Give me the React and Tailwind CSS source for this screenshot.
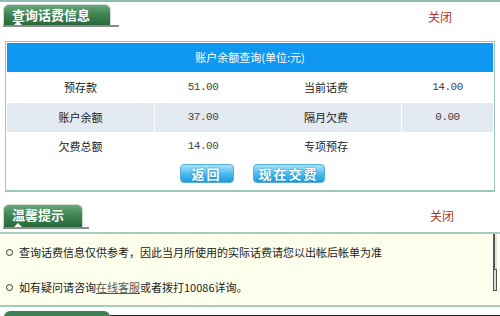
import React from "react";

const rows = [
  { a: "预存款", av: "51.00", b: "当前话费", bv: "14.00", alt: false, h: "h-[31px]" },
  { a: "账户余额", av: "37.00", b: "隔月欠费", bv: "0.00", alt: true, h: "h-[29px]" },
  { a: "欠费总额", av: "14.00", b: "专项预存", bv: "", alt: false, h: "h-[28px]" },
];

function Tab({ title, w, h, line }) {
  return (
    <div className="flex flex-col">
      <div
        className={`${w} ${h} relative ml-[3px] rounded-t-[6px] border border-b-0 border-[#cfd8d2] bg-gradient-to-b from-[#66a877] via-[#3f8251] to-[#2a683a] pl-[8px] text-[13px] font-bold leading-[19px] text-white`}
      >
        {title}
        <span className="absolute bottom-0 left-[10px] h-0 w-0 border-x-[4px] border-b-[4px] border-x-transparent border-b-white" />
      </div>
      <div className={`${line} ml-[3px] h-[2px] bg-[#8c8c8c]`} />
    </div>
  );
}

function BlueButton({ children, w }) {
  return (
    <button
      className={`${w} h-[19px] rounded-[4px] border border-[#55addb] bg-gradient-to-b from-[#a9e2fb] via-[#4cbdf0] to-[#1f9ad9] text-[13px] font-bold leading-[17px] tracking-[2px] text-white [text-shadow:0_0_2px_#1c7fb5]`}
    >
      {children}
    </button>
  );
}

export default function App() {
  return (
    <div
      className="relative h-[316px] w-[500px] overflow-hidden bg-white text-[#222]"
      style={{ fontFamily: '"Noto Sans CJK SC", "DejaVu Sans", sans-serif' }}
    >
      <div className="h-[2px] bg-[#8fbcb0]" />

      {/* section 1 header */}
      <div className="flex items-start justify-between pt-[2px]">
        <Tab title="查询话费信息" w="w-[108px]" h="h-[21px]" line="w-[116px]" />
        <span className="mr-[48px] pt-[5px] text-[12px] leading-[16px] text-[#b0322b]">关闭</span>
      </div>

      {/* section 1 panel */}
      <div className="mx-[5px] mt-[14px] border border-b-2 border-[#9fc7bd] p-[1px]">
        <div className="flex h-[29px] items-center justify-center bg-[#0f98f1] text-[11px] text-white">
          账户余额查询(单位:元)
        </div>
        {rows.map((r) => (
          <div
            key={r.a}
            className={`grid ${r.h} grid-cols-[148px_96px_151px_1fr] text-[11px] ${r.alt ? "bg-[#e3eaf2]" : "bg-white"}`}
          >
            <div className="flex items-center justify-center border-r border-white">{r.a}</div>
            <div className="flex items-center justify-center font-['Liberation_Mono',monospace] text-[11px] tracking-[-0.5px] text-[#444]">
              {r.av}
            </div>
            <div className="flex items-center justify-center border-r border-white">{r.b}</div>
            <div className="flex items-center justify-center font-['Liberation_Mono',monospace] text-[11px] tracking-[-0.5px] text-[#444]">
              {r.bv}
            </div>
          </div>
        ))}
        <div className="flex h-[29px] justify-center gap-[19px] pl-[4px] pt-[4px]">
          <BlueButton w="w-[54px]">返回</BlueButton>
          <BlueButton w="w-[72px]">现在交费</BlueButton>
        </div>
      </div>

      {/* section 2 header */}
      <div className="flex items-start justify-between pt-[12px]">
        <Tab title="温馨提示" w="w-[80px]" h="h-[23px]" line="w-[86px]" />
        <span className="mr-[46px] pt-[4px] text-[12px] leading-[16px] text-[#b0322b]">关闭</span>
      </div>

      {/* section 2 panel */}
      <div className="mt-[3px] flex h-[75px] border-y-2 border-[#a6cbc1] bg-[#fefeec]">
        <div className="flex flex-1 flex-col gap-[19px] pl-[6px] pt-[10px] text-[11px] leading-[16px]">
          <div className="flex items-center gap-[6px]">
            <span className="h-[7px] w-[7px] rounded-full border border-[#333]" />
            <span>查询话费信息仅供参考，因此当月所使用的实际话费请您以出帐后帐单为准</span>
          </div>
          <div className="flex items-center gap-[6px]">
            <span className="h-[7px] w-[7px] rounded-full border border-[#333]" />
            <span>
              如有疑问请咨询<span className="text-[#4d5a55] underline">在线客服</span>或者拨打10086详询。
            </span>
          </div>
        </div>
        <div className="mr-[3px] flex w-[4px] flex-col">
          <div className="h-[35px] border-l-2 border-[#555] bg-[#e4e4e4]" />
          <div className="h-[22px] border border-[#555] bg-[#dcdcdc]" />
        </div>
      </div>

      {/* next section peek */}
      <div className="flex h-[10px] items-end pt-[2px]">
        <div className="ml-[4px] h-[6px] w-[106px] rounded-t-[6px] bg-[#3f8251]" />
        <div className="h-[2px] flex-1 bg-[#222]" />
      </div>
    </div>
  );
}
